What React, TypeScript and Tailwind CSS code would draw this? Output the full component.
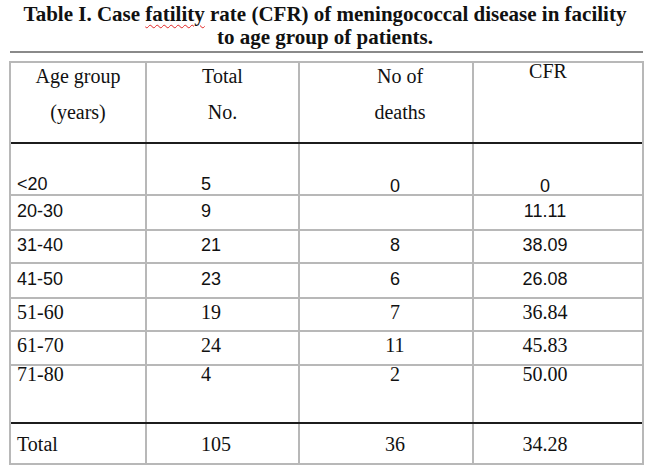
const serif = "[font-family:'Liberation_Serif','Times_New_Roman',serif]";
const sans = "[font-family:'Liberation_Sans',Arial,sans-serif]";

type Row = {
  age: string;
  total: string;
  deaths: string;
  cfr: string;
  height: string;
  pad: string;
  padRight: string;
  font: string;
  border: string;
};

const gray = "border-[#b8b8b8]";

const rows: Row[] = [
  { age: "<20", total: "5", deaths: "0", cfr: "0", height: "h-[52px]", pad: "pt-[30px]", padRight: "pt-[32px]", font: "text-[18px] leading-[20px] " + sans, border: "border-b-2 border-[#b8b8b8]" },
  { age: "20-30", total: "9", deaths: "", cfr: "11.11", height: "h-[35px]", pad: "pt-[5px]", padRight: "pt-[5px]", font: "text-[18px] leading-[20px] " + sans, border: "border-b-2 border-[#b8b8b8]" },
  { age: "31-40", total: "21", deaths: "8", cfr: "38.09", height: "h-[33px]", pad: "pt-[4px]", padRight: "pt-[4px]", font: "text-[18px] leading-[20px] " + sans, border: "border-b-2 border-[#b8b8b8]" },
  { age: "41-50", total: "23", deaths: "6", cfr: "26.08", height: "h-[35px]", pad: "pt-[5px]", padRight: "pt-[5px]", font: "text-[18px] leading-[20px] " + sans, border: "border-b-2 border-[#b8b8b8]" },
  { age: "51-60", total: "19", deaths: "7", cfr: "36.84", height: "h-[33px]", pad: "pt-[3px]", padRight: "pt-[3px]", font: "text-[20px] leading-[20px] " + serif, border: "border-b-2 border-[#b8b8b8]" },
  { age: "61-70", total: "24", deaths: "11", cfr: "45.83", height: "h-[34px]", pad: "pt-[3px]", padRight: "pt-[3px]", font: "text-[20px] leading-[20px] " + serif, border: "border-b-2 border-[#b8b8b8]" },
  { age: "71-80", total: "4", deaths: "2", cfr: "50.00", height: "h-[58px]", pad: "pt-0", padRight: "pt-0", font: "text-[20px] leading-[16px] " + serif, border: "border-b-2 border-[#1c1c1c]" },
  { age: "Total", total: "105", deaths: "36", cfr: "34.28", height: "h-[39px]", pad: "pt-[10px]", padRight: "pt-[10px]", font: "text-[20px] leading-[20px] " + serif, border: "" },
];

const App = () => {
  return (
    <div className="w-[650px] h-[472px] bg-white text-[#111] overflow-hidden">
      {/* Caption */}
      <div className={"pt-[3px] text-center text-[21px] leading-[23px] font-bold " + serif}>
        <div>
          Table I. Case{" "}
          <span className="underline decoration-wavy decoration-[#e02424] decoration-1 underline-offset-[3px]">
            fatility
          </span>{" "}
          rate (CFR) of meningococcal disease in facility
        </div>
        <div>to age group of patients.</div>
      </div>

      <div className="mt-[2px] ml-[10px] w-[633px] h-[2px] bg-[#8a8a8a]" />

      {/* Table */}
      <div className={"mt-[8px] ml-[9px] w-[635px] border-2 " + gray}>
        {/* Header */}
        <div className={"flex h-[81px] border-b-2 border-[#1c1c1c] text-[20px] " + serif}>
          <div className={"w-[136px] border-r-2 text-center pt-[1px] " + gray}>
            <div className="leading-[24px]">Age group</div>
            <div className="leading-[24px] mt-[12px]">(years)</div>
          </div>
          <div className={"w-[153px] border-r-2 text-center pt-[1px] " + gray}>
            <div className="leading-[24px]">Total</div>
            <div className="leading-[24px] mt-[12px]">No.</div>
          </div>
          <div className={"w-[174px] border-r-2 text-center pt-[1px] pl-[28px] " + gray}>
            <div className="leading-[24px]">No of</div>
            <div className="leading-[24px] mt-[12px]">deaths</div>
          </div>
          <div className="w-[168px] text-center pr-[20px]">
            <div className="leading-[16px]">CFR</div>
          </div>
        </div>

        {/* Body */}
        {rows.map((r) => (
          <div key={r.age} className={"flex " + r.height + " " + r.border + " " + r.font}>
            <div className={"w-[136px] border-r-2 pl-[6px] " + gray + " " + r.pad}>{r.age}</div>
            <div className={"w-[153px] border-r-2 pl-[54px] " + gray + " " + r.pad}>{r.total}</div>
            <div className={"w-[174px] border-r-2 text-center pl-[18px] " + gray + " " + r.padRight}>{r.deaths}</div>
            <div className={"w-[168px] text-center pr-[26px] " + r.padRight}>{r.cfr}</div>
          </div>
        ))}
      </div>
    </div>
  );
};

export default App;
